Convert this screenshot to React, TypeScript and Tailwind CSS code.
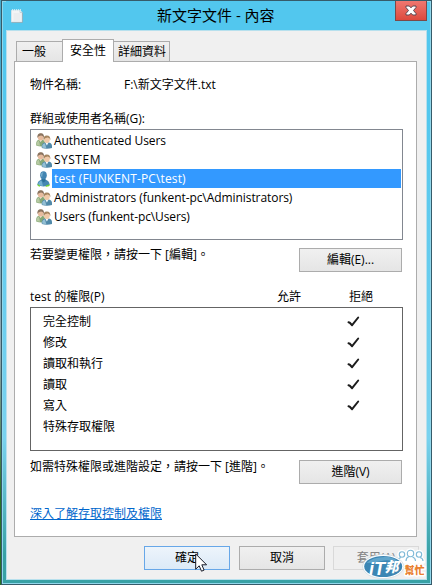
import clsx from "clsx";

const principals = [
  { name: "Authenticated Users", group: true, tracking: "tracking-[-0.1px]" },
  { name: "SYSTEM", group: true, tracking: "tracking-[0.5px]" },
  { name: "test (FUNKENT-PC\\test)", group: false, tracking: "tracking-[0.13px]" },
  {
    name: "Administrators (funkent-pc\\Administrators)",
    group: true,
    tracking: "tracking-[-0.07px]",
  },
  { name: "Users (funkent-pc\\Users)", group: true, tracking: "tracking-[-0.12px]" },
];

const permissions = [
  { name: "完全控制", deny: true },
  { name: "修改", deny: true },
  { name: "讀取和執行", deny: true },
  { name: "讀取", deny: true },
  { name: "寫入", deny: true },
  { name: "特殊存取權限", deny: false },
];

function FileIcon() {
  return (
    <svg width="12" height="15" viewBox="0 0 12 15" className="block">
      <path d="M.5 2.500h8.500l2 2v9.500H.5z" fill="#f3f4f5" stroke="#d5e3ea" />
      <path d="M.5 14.500h11v-10" fill="none" stroke="#8fa9b5" strokeWidth=".8" />
      <path d="M1 2h9" stroke="#e9f3f7" strokeWidth="1.500" strokeDasharray="1.200 .8" />
      <path d="M2.500 6h7M2.500 8h7M2.500 10h7M2.500 12h7" stroke="#e3e6e9" />
      <path d="M9 2.500v2h2" fill="#fff" stroke="#b5c6ce" strokeWidth=".7" />
    </svg>
  );
}

function GroupIcon() {
  return (
    <svg width="16" height="16" viewBox="0 0 16 16" className="block">
      <path d="M.2 12.500V10Q.4 7.200 3 6.800h3.500q2.500.5 2.700 3v3.200q-4.500 1-9 -.5z" fill="#86a877" />
      <path d="M.6 12.300V10Q1 8 3 7.500l1 5.300z" fill="#b6c9a2" />
      <path d="M3.200 7l1.400 2L6.200 7z" fill="#f4ece0" />
      <ellipse cx="4.700" cy="4" rx="2.900" ry="3.500" fill="#e6bb9e" />
      <path d="M1.300 5Q1 .3 4.700.2 8.400 0 8 5 7.300 2.600 5.200 2.400 2.300 2.300 1.300 5z" fill="#8a7460" />
      <path d="M5.800 15v-2.500q.4-2.700 3-3h3.700q3.200.3 3.500 3.200V15q-5 1.300-10.200 0z" fill="#5089a9" />
      <path d="M6.300 14.700v-2.300q.5-2 2.600-2.200l1.400 4.900z" fill="#94bfd4" />
      <path d="M9.300 9.500l1.600 3 1.600-3z" fill="#f8fafb" />
      <ellipse cx="10.900" cy="6.500" rx="2.900" ry="3.500" fill="#f0c9a8" />
      <path d="M7.500 7.200Q7 2.600 10.800 2.500q4 .1 3.500 4.700-.5-2.200-2.500-2.600-3-.2-4.300 2.600z" fill="#a58560" />
    </svg>
  );
}

function UserIcon() {
  return (
    <svg width="16" height="16" viewBox="0 0 16 16" className="block">
      <path d="M1.500 14.300q-.5-4 4-5.800h4q4.500 1.800 4 5.800-6 2.200-12 0z" fill="#4688b3" />
      <path d="M2.200 14q0-3 3.200-4.700L7 14.900z" fill="#73b0d0" />
      <path d="M1.800 13.600l2.200 1.500-1.600-.2zM9.800 15.200l3.500-1.500-.4 1.200z" fill="#75d52d" stroke="#75d52d" strokeWidth=".8" />
      <path d="M5.500 7.500h4V10l-1.900 1.500L5.500 9.500z" fill="#2c7198" />
      <ellipse cx="7.500" cy="4.300" rx="3.300" ry="4.100" fill="#4285b2" />
      <path d="M4.800 4Q5 1.200 7.400 1.200 6 3 6.200 6 5 6 4.800 4z" fill="#75adcc" />
    </svg>
  );
}

function CheckIcon() {
  return (
    <svg width="13" height="12" viewBox="0 0 13 12" className="block">
      <path
        d="M1.500 6.300l1.300.4 2.300 2.500L11.200 1.500"
        fill="none"
        stroke="#1c1c1c"
        strokeWidth="2"
        strokeLinecap="round"
        strokeLinejoin="round"
      />
    </svg>
  );
}

function CloseIcon() {
  return (
    <svg width="12" height="11" viewBox="0 0 12 11" className="block">
      <path
        d="M1 1h3.300L6 2.800 7.700 1H11v1.500L8.500 5.500 11 8.500V10H7.700L6 8.200 4.300 10H1V8.500l2.500-3L1 2.500z"
        fill="#fff"
        stroke="#5b4650"
        strokeWidth="1"
      />
    </svg>
  );
}

function Cursor() {
  return (
    <svg width="13" height="20" viewBox="0 0 13 20" className="absolute top-[7px] left-[51px]">
      <path d="M.7.9v15.300l3.500-3.400 2.300 5.400 2.600-1.100-2.300-5.300h4.800z" fill="#fff" stroke="#171b28" strokeWidth="1" />
    </svg>
  );
}

function Watermark() {
  return (
    <svg width="68" height="34" viewBox="0 0 68 34" className="absolute right-[2px] bottom-[2px]">
      <g stroke="#fff" strokeWidth="3.500" fill="#fff" strokeLinejoin="round">
        <circle cx="41" cy="6.500" r="3" />
        <circle cx="49.500" cy="5.500" r="3.500" />
        <circle cx="58" cy="6.500" r="3" />
        <path d="M37 14q1-4 4.500-4 3 0 4 2 1-3 4-3t4 3q1.500-2 4.500-2 4 0 4.500 4z" />
      </g>
      <g stroke="#7eb9d7" strokeWidth="1.100" fill="#fff">
        <path d="M37 13q0-3 3-3.500M45 13q0-3.500 3-4.500M51.500 9q3 1 3 4M59 9.500q3 .8 3 3.500" fill="none" />
        <circle cx="41" cy="6.500" r="2.700" />
        <circle cx="49.500" cy="5.500" r="3.200" />
        <circle cx="58" cy="6.500" r="2.700" />
      </g>
      <ellipse cx="22.200" cy="18.500" rx="20.500" ry="12" fill="#fff" stroke="#c3d3dc" strokeWidth=".6" />
      <ellipse cx="22.200" cy="18.500" rx="19" ry="10.500" fill="#3b86b4" />
      <path d="M5.500 15Q12.500 8 27.500 9q7 1 11 6-10-4-18-2T5.500 15z" fill="#60a5cb" />
      <g
        fontFamily="'Liberation Sans', 'Noto Sans CJK TC', sans-serif"
        fontWeight="900"
        fontStyle="italic"
        fill="#fff"
      >
        <text x="8" y="26.500" fontSize="19" textLength="16" lengthAdjust="spacingAndGlyphs">
          iT
        </text>
        <text x="23.500" y="24" fontSize="14">
          邦
        </text>
      </g>
      <text
        x="43.500"
        y="25.500"
        fontSize="10"
        fontWeight="900"
        fontFamily="'Noto Sans CJK TC', sans-serif"
        fill="#e97f30"
        stroke="#fff"
        strokeWidth="3"
        strokeLinejoin="round"
        paintOrder="stroke"
      >
        幫忙
      </text>
    </svg>
  );
}

function Button({ label, className }: { label: string; className?: string }) {
  return (
    <button
      className={clsx(
        "flex shrink-0 items-center justify-center border",
        className ?? "border-[#acacac] bg-linear-to-b from-[#f0f0f0] to-[#e5e5e5]",
      )}
    >
      {label}
    </button>
  );
}

export default function App() {
  return (
    <div className="flex h-[585px] w-[432px] overflow-hidden bg-linear-to-b from-[#45a9cc] from-10% via-[#92a7b1] via-60% to-[#287126] to-85% pl-px font-['Open_Sans','Noto_Sans_CJK_TC',sans-serif] text-[12px] leading-[18px] text-black">
      <div className="relative flex grow flex-col border border-[#365b6a] bg-linear-to-b from-[#52c7ee] from-20% via-[#79d2ef] via-75% to-[#38a1a5] to-95% px-[4px] pb-[4px] shadow-[inset_0_0_0_1px_#91d7eb]">
        <header className="flex h-[29px] shrink-0 items-start bg-[#52c7ee]">
          <div className="mt-[7px] ml-[5px]">
            <FileIcon />
          </div>
          <h1 className="mt-[2px] ml-[134px] text-[15px] leading-[24px] whitespace-nowrap">
            新文字文件 - 內容
          </h1>
          <button className="ml-auto flex h-[20px] w-[32px] items-center justify-center border border-t-0 border-[#7c4948] bg-linear-to-b from-[#ef7770] to-[#dc493d]">
            <CloseIcon />
          </button>
        </header>

        <main className="flex grow flex-col border border-[#b7e0ed] bg-[#f0f0f0] px-[7px] pt-[8px]">
          <nav className="z-10 flex h-[23px] shrink-0 items-end pl-[2px]">
            <div className="mb-px flex h-[20px] w-[46px] items-center border border-r-0 border-b-0 border-[#acacac] bg-linear-to-b from-[#f0f0f0] to-[#e5e5e5] pl-[5px]">
              一般
            </div>
            <div className="flex h-[23px] w-[52px] items-center border border-b-0 border-[#acacac] bg-white pb-px pl-[7px]">
              安全性
            </div>
            <div className="mb-px flex h-[20px] w-[56px] items-center border border-b-0 border-l-0 border-[#acacac] bg-linear-to-b from-[#f0f0f0] to-[#e5e5e5] pl-[4px]">
              詳細資料
            </div>
          </nav>

          <section className="-mt-px flex h-[476px] w-[403px] shrink-0 flex-col border border-[#acacac] bg-white pr-[13px] pl-[15px]">
            <div className="mt-[14px] flex">
              <span className="w-[94px]">物件名稱:</span>
              <span>F:\新文字文件.txt</span>
            </div>
            <div className="mt-[16px]">群組或使用者名稱(G):</div>

            <ul className="mt-px h-[111px] shrink-0 border border-[#828790] p-px">
              {principals.map((item) => (
                <li key={item.name} className="flex h-[19px] items-center pl-[4px]">
                  {item.group ? <GroupIcon /> : <UserIcon />}
                  <span
                    className={clsx(
                      "flex h-full grow items-center pl-[2px] whitespace-nowrap",
                      item.tracking,
                      !item.group && "bg-[#3399ff] text-white",
                    )}
                  >
                    {item.name}
                  </span>
                </li>
              ))}
            </ul>

            <div className="mt-[6px] flex h-[26px] shrink-0 justify-between pr-px">
              <p>若要變更權限，請按一下 [編輯]。</p>
              <div className="mt-[2px] flex h-[24px] w-[103px] *:grow">
                <Button label="編輯(E)..." />
              </div>
            </div>

            <div className="mt-[16px] flex">
              <span className="w-[247px]">test 的權限(P)</span>
              <span className="w-[72px]">允許</span>
              <span>拒絕</span>
            </div>

            <ul className="mt-px h-[144px] shrink-0 border border-[#646464] pt-[3px] pl-[12px]">
              {permissions.map((item) => (
                <li key={item.name} className="flex h-[21px] items-center">
                  <span className="w-[304px]">{item.name}</span>
                  {item.deny && <CheckIcon />}
                </li>
              ))}
            </ul>

            <div className="mt-[7px] flex h-[26px] shrink-0 justify-between pr-px">
              <p>如需特殊權限或進階設定，請按一下 [進階]。</p>
              <div className="mt-[2px] flex h-[24px] w-[103px] *:grow">
                <Button label="進階(V)" />
              </div>
            </div>
            <a className="mt-[21px] self-start text-[#0066cc] underline underline-offset-[1px]">
              深入了解存取控制及權限
            </a>
          </section>

          <footer className="mt-[9px] flex h-[24px] shrink-0 gap-[8px] pl-[130px] *:w-[86px]">
            <div className="relative mr-px flex *:first:grow">
              <Button
                label="確定"
                className="border-[#67a7e8] bg-linear-to-b from-[#edf4fb] to-[#dceaf7]"
              />
              <Cursor />
            </div>
            <Button label="取消" />
            <Button label="套用(A)" className="border-[#d9d9d9] bg-[#efefef] text-[#838383]" />
          </footer>
        </main>
        <Watermark />
      </div>
    </div>
  );
}
